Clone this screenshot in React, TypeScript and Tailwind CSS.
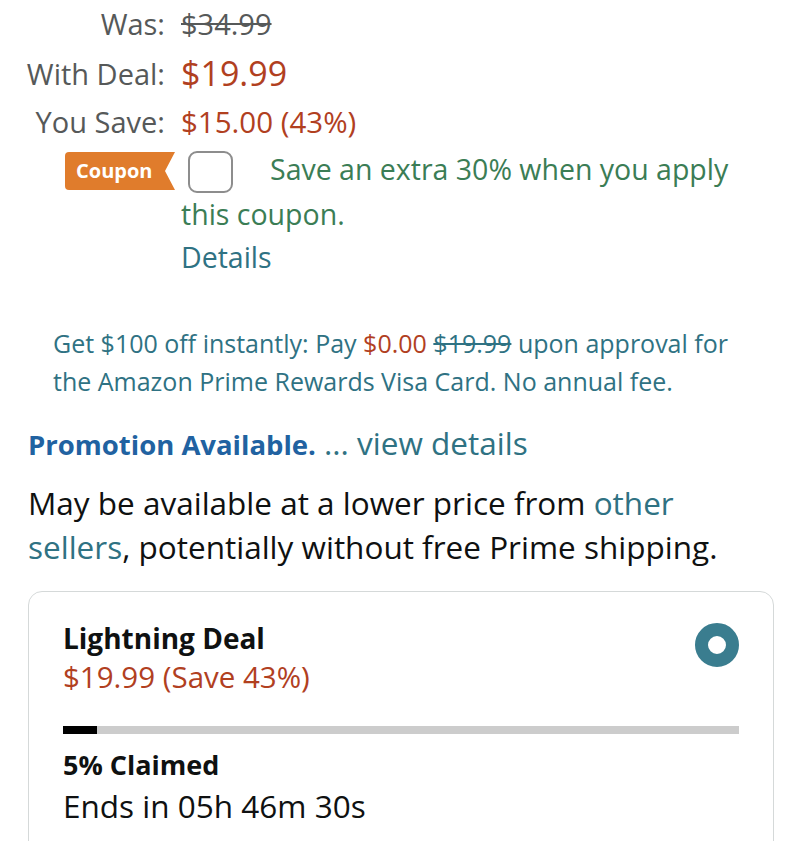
import React from "react";

const FONT = { fontFamily: '"Open Sans", "Noto Sans", Arial, sans-serif' };

function PriceRow({ label, children, className }: { label: string; children: React.ReactNode; className?: string }) {
  return (
    <div className={"grid grid-cols-[181px_1fr] items-center " + (className ?? "")}>
      <div className="pr-4 text-right text-[29px] text-[#565959]">{label}</div>
      <div>{children}</div>
    </div>
  );
}

export default function App() {
  return (
    <div className="min-h-screen bg-white overflow-hidden" style={FONT}>
      <PriceRow label="Was:" className="h-[48px]">
        <span className="text-[29px] text-[#565959] line-through">$34.99</span>
      </PriceRow>
      <PriceRow label="With Deal:" className="h-[48px]">
        <span className="text-[34px] text-[#b1401f]">$19.99</span>
      </PriceRow>
      <PriceRow label="You Save:" className="h-[52px]">
        <span className="text-[29.5px] text-[#b1401f]">$15.00 (43%)</span>
      </PriceRow>

      {/* coupon */}
      <div className="grid grid-cols-[181px_1fr]">
        <div className="flex justify-end pr-[6px] pt-[4px]">
          <div className="h-[38px] w-[110px] rounded-l-[4px] bg-[#e07c2c] pl-[11px] pr-[20px] text-[20px] font-bold leading-[38px] text-white [clip-path:polygon(0_0,100%_0,calc(100%-10px)_50%,100%_100%,0_100%)]">
            Coupon
          </div>
        </div>
        <div className="pr-6 text-[28.5px] leading-[43px] text-[#3b7d55]">
          <p>
            <span className="ml-[7px] mr-[37px] inline-block h-[42px] w-[45px] rounded-[9px] border-2 border-[#8d8d8d] align-middle" />
            Save an extra 30% when you apply this coupon.
          </p>
          <p className="text-[#2f7283]">Details</p>
        </div>
      </div>

      {/* card offer */}
      <p className="mt-[45px] pl-[53px] pr-[40px] text-[25px] leading-[38px] text-[#2f7283]">
        Get $100 off instantly: Pay <span className="text-[#b1401f]">$0.00</span>{" "}
        <span className="line-through">$19.99</span> upon approval for the Amazon Prime Rewards Visa Card. No annual fee.
      </p>

      <p className="mt-[25px] pl-[28px] text-[31.5px] leading-[36px] text-[#2f7283]">
        <span className="text-[27.5px] font-bold text-[#2162a1]">Promotion Available.</span> ... view details
      </p>

      <p className="mt-[18px] pl-[28px] pr-[60px] text-[31.5px] leading-[44px] text-[#0f1111]">
        May be available at a lower price from <span className="text-[#2f7283]">other sellers</span>, potentially
        without free Prime shipping.
      </p>

      {/* lightning deal card */}
      <div className="mx-[28px] mt-[22px] h-[300px] w-[746px] rounded-[14px] border border-[#d5d9d9] px-[34px] pt-[27px]">
        <div className="flex items-start justify-between">
          <div>
            <p className="text-[28px] font-bold leading-[38px] text-[#0f1111]">Lightning Deal</p>
            <p className="text-[29.5px] leading-[39px] text-[#b1401f]">$19.99 (Save 43%)</p>
          </div>
          <div className="mt-[4px] h-[44px] w-[44px] rounded-full border-[13px] border-[#3a7d8f]" />
        </div>
        <div className="mt-[30px] h-[8px] w-full bg-[#cccccc]">
          <div className="h-full bg-black" style={{ width: "5%" }} />
        </div>
        <p className="mt-[11px] text-[27px] font-bold leading-[40px] text-[#0f1111]">5% Claimed</p>
        <p className="text-[31.5px] leading-[42px] text-[#0f1111]">Ends in 05h 46m 30s</p>
      </div>
    </div>
  );
}
